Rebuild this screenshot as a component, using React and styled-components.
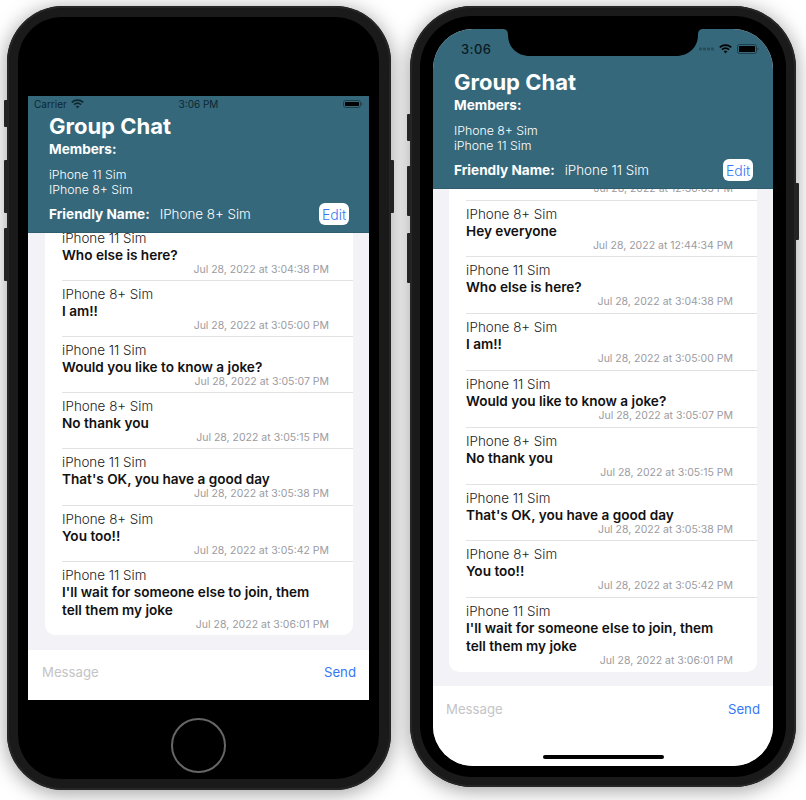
import styled, { createGlobalStyle } from "styled-components";

const GlobalStyle = createGlobalStyle`
  html, body {
    margin: 0;
    background: #fff;
    font-family: Inter, "Liberation Sans", sans-serif;
  }
`

const Page = styled.div`
  display: flex;
  gap: 19px;
  width: 806px;
  height: 800px;
  padding: 6px 0 0 7px;
  box-sizing: border-box;
  overflow: hidden;
  align-items: flex-start;
`

const Body = styled.div`
  position: relative;
  flex: none;
  display: flex;
  width: ${(p) => (p.$modern ? 386 : 384)}px;
  height: ${(p) => (p.$modern ? 781 : 784)}px;
  padding: ${(p) => (p.$modern ? "10px" : "11px 12px 11px 11px")};
  box-sizing: border-box;
  border-radius: ${(p) => (p.$modern ? 62 : 56)}px;
  background: #1a1a1a;
  box-shadow: inset 0 0 0 2px #262626, 0 3px 20px 1px rgba(0, 0, 0, 0.36);
`

const SideButton = styled.span`
  position: absolute;
  top: ${(p) => p.$top}px;
  ${(p) => (p.$right ? "right: -3px;" : "left: -3px;")}
  width: 4px;
  height: ${(p) => p.$height}px;
  background: #242424;
  border-radius: 1px;
`

const Bezel = styled.div`
  position: relative;
  flex: 1;
  display: flex;
  align-items: flex-start;
  justify-content: center;
  padding-top: ${(p) => (p.$modern ? 13 : 79)}px;
  background: #000;
  border-radius: ${(p) => (p.$modern ? 52 : 44)}px;
`

const Screen = styled.div`
  position: relative;
  display: flex;
  flex-direction: column;
  width: ${(p) => (p.$modern ? 340 : 341)}px;
  height: ${(p) => (p.$modern ? 737 : 604)}px;
  overflow: hidden;
  background: #f2f2f7;
  border-radius: ${(p) => (p.$modern ? "40px" : "0")};
`

const HomeButton = styled.span`
  position: absolute;
  left: 153px;
  bottom: 6px;
  width: 51px;
  height: 51px;
  border: 2px solid #666;
  border-radius: 50%;
`

const Notch = styled.svg`
  position: absolute;
  top: 0;
  left: 70px;
  width: 200px;
  height: 28px;
`

const HomeIndicator = styled.span`
  position: absolute;
  left: 110px;
  bottom: 7px;
  width: 121px;
  height: 4px;
  background: #000;
  border-radius: 2px;
`

const Header = styled.header`
  flex: none;
  background: #35687b;
  color: #fff;
  border-bottom: 1px solid #2f5d6e;
`

const StatusBar = styled.div`
  display: grid;
  grid-template-columns: 1fr auto 1fr;
  align-items: center;
  height: 16px;
  padding: 0 6px;
  font-size: 10px;
  color: #0e2630;
`

const StatusGroup = styled.div`
  display: flex;
  align-items: center;
  gap: ${(p) => p.$gap || 4}px;
  justify-content: ${(p) => (p.$end ? "flex-end" : "flex-start")};
`

const TallStatusBar = styled.div`
  display: flex;
  align-items: center;
  justify-content: space-between;
  height: 40px;
  padding: 0 14px 0 28px;
  font-size: 13px;
  font-weight: 500;
  letter-spacing: 0.4px;
  color: #0a1a20;
`

const HeaderBody = styled.div`
  padding: 0 20px 0 21px;
`

const Title = styled.h1`
  margin: 0;
  font-size: 22px;
  line-height: ${(p) => (p.$modern ? 27 : 28)}px;
  font-weight: 700;
`

const Label = styled.div`
  font-size: 13.6px;
  line-height: 18px;
  font-weight: 700;
`

const Members = styled.div`
  margin-top: 9px;
  font-size: 12.3px;
  line-height: 15px;
  font-weight: 300;
`

const FriendlyRow = styled.div`
  display: flex;
  align-items: center;
  gap: 10px;
  height: 22px;
  margin: 6px 0 7px;
`

const FriendlyValue = styled.span`
  flex: 1;
  font-size: 13.4px;
  font-weight: 300;
`

const EditButton = styled.button`
  width: 30px;
  height: 22px;
  padding: 0;
  border: 0;
  border-radius: 6px;
  background: #fff;
  color: #3478f6;
  font: inherit;
  font-size: 14px;
  font-weight: 300;
`

const List = styled.div`
  flex: 1;
  min-height: 0;
  display: flex;
  flex-direction: column;
  justify-content: flex-end;
  overflow: hidden;
  padding: ${(p) => (p.$modern ? "0 16px 14px 16px" : "0 16px 15px 17px")};
`

const Card = styled.div`
  flex: none;
  background: #fff;
  border-radius: 10px;
  padding-left: 17px;
`

const Row = styled.div`
  padding: 5px 0 ${(p) => (p.$modern ? 4.8 : 4.2)}px;
  border-bottom: 1px solid #e2e2e4;

  &:last-child {
    border-bottom: 0;
  }
`

const Sender = styled.div`
  font-size: 13.4px;
  line-height: 16px;
  font-weight: 300;
  color: #222;
`

const MessageText = styled.div`
  padding-right: 30px;
  font-size: 13.6px;
  line-height: 18px;
  font-weight: 600;
  color: #111;
  margin-bottom: -1px;
`

const Time = styled.div`
  padding-right: 24px;
  text-align: right;
  font-size: 10.5px;
  line-height: 13px;
  color: #9b9b9f;
`

const Footer = styled.div`
  flex: none;
  display: flex;
  justify-content: space-between;
  height: ${(p) => (p.$modern ? 80 : 50)}px;
  padding: ${(p) => (p.$modern ? "15px 13px 0" : "14px 13px 0 14px")};
  box-sizing: border-box;
  background: #fff;
  font-size: 13.2px;
  line-height: 17px;
`

const Placeholder = styled.span`
  color: #c4c4c6;
`

const SendLink = styled.span`
  color: #3478f6;
`

const messages = [
  { from: "iPhone 11 Sim", text: "Hello", at: "12:36:03 PM" },
  { from: "IPhone 8+ Sim", text: "Hey everyone", at: "12:44:34 PM" },
  { from: "iPhone 11 Sim", text: "Who else is here?", at: "3:04:38 PM" },
  { from: "IPhone 8+ Sim", text: "I am!!", at: "3:05:00 PM" },
  { from: "iPhone 11 Sim", text: "Would you like to know a joke?", at: "3:05:07 PM" },
  { from: "IPhone 8+ Sim", text: "No thank you", at: "3:05:15 PM" },
  { from: "iPhone 11 Sim", text: "That's OK, you have a good day", at: "3:05:38 PM" },
  { from: "IPhone 8+ Sim", text: "You too!!", at: "3:05:42 PM" },
  { from: "iPhone 11 Sim", text: "I'll wait for someone else to join, them tell them my joke", at: "3:06:01 PM" },
]

function Wifi({ color = "#0e2630", width = 13 }) {
  return (
    <svg width={width} height={width * 0.72} viewBox="0 0 18 13" fill="none" stroke={color} strokeWidth="2.2">
      <path d="M1 4.6C5.6.6 12.4.6 17 4.6" />
      <path d="M4 7.8c3-2.6 7-2.6 10 0" />
      <path d="M9 12.6 6.8 10.4c1.3-1 3.1-1 4.4 0z" fill={color} strokeWidth="0.6" />
    </svg>
  )
}

function Battery({ width = 18, height = 8, color = "#1d3f4d", fill = "#000" }) {
  return (
    <svg width={width + 2} height={height} viewBox={`0 0 ${width + 2} ${height}`}>
      <rect x="0.5" y="0.5" width={width - 1} height={height - 1} rx="2" fill="none" stroke={color} />
      <rect x="2" y="2" width={width - 4} height={height - 4} rx="0.6" fill={fill} />
      <rect x={width + 0.4} y={height / 2 - 1} width="1" height="2" fill={color} />
    </svg>
  )
}

function SignalDots() {
  return (
    <svg width="15" height="4" viewBox="0 0 15 4" fill="#2a4d5a">
      <rect x="0" y="0.5" width="3" height="3" rx="1" />
      <rect x="4" y="0.5" width="3" height="3" rx="1" />
      <rect x="8" y="0.5" width="3" height="3" rx="1" />
      <rect x="12" y="0.5" width="3" height="3" rx="1" />
    </svg>
  )
}

function ChatScreen({ modern, members, friendly }) {
  return (
    <Screen $modern={modern}>
      <Header>
        {modern ? (
          <TallStatusBar>
            <span>3:06</span>
            <StatusGroup $gap={5}>
              <SignalDots />
              <Wifi color="#000" width={13} />
              <Battery width={20} height={10} />
            </StatusGroup>
          </TallStatusBar>
        ) : (
          <StatusBar>
            <StatusGroup>
              Carrier
              <Wifi />
            </StatusGroup>
            <span>3:06 PM</span>
            <StatusGroup $end>
              <Battery />
            </StatusGroup>
          </StatusBar>
        )}
        <HeaderBody>
          <Title $modern={modern}>Group Chat</Title>
          <Label>Members:</Label>
          <Members>
            {members.map((m) => (
              <div key={m}>{m}</div>
            ))}
          </Members>
          <FriendlyRow>
            <Label>Friendly Name:</Label>
            <FriendlyValue>{friendly}</FriendlyValue>
            <EditButton>Edit</EditButton>
          </FriendlyRow>
        </HeaderBody>
      </Header>
      <List $modern={modern}>
        <Card>
          {messages.map((m) => (
            <Row key={m.at} $modern={modern}>
              <Sender>{m.from}</Sender>
              <MessageText>{m.text}</MessageText>
              <Time>Jul 28, 2022 at {m.at}</Time>
            </Row>
          ))}
        </Card>
      </List>
      <Footer $modern={modern}>
        <Placeholder>Message</Placeholder>
        <SendLink>Send</SendLink>
      </Footer>
      {modern && (
        <>
          <Notch viewBox="0 0 200 28">
            <path
              fill="#000"
              d="M0 0H200C196 0 195 3 195 6C195 18 186 27 173 27H27C14 27 5 18 5 6C5 3 4 0 0 0Z"
            />
          </Notch>
          <HomeIndicator />
        </>
      )}
    </Screen>
  )
}

function App() {
  return (
    <>
      <GlobalStyle />
      <Page>
        <Body>
          <SideButton $top={94} $height={27} />
          <SideButton $top={154} $height={53} />
          <SideButton $top={222} $height={53} />
          <SideButton $right $top={154} $height={53} />
          <Bezel>
            <ChatScreen members={["iPhone 11 Sim", "IPhone 8+ Sim"]} friendly="IPhone 8+ Sim" />
            <HomeButton />
          </Bezel>
        </Body>
        <Body $modern>
          <SideButton $top={108} $height={27} />
          <SideButton $top={160} $height={50} />
          <SideButton $top={227} $height={50} />
          <SideButton $right $top={177} $height={57} />
          <Bezel $modern>
            <ChatScreen modern members={["IPhone 8+ Sim", "iPhone 11 Sim"]} friendly="iPhone 11 Sim" />
          </Bezel>
        </Body>
      </Page>
    </>
  )
}

export default App;
